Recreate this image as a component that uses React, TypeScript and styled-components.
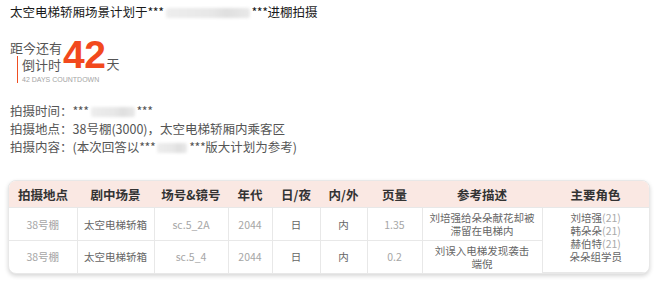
import styled, { createGlobalStyle } from 'styled-components';

const GlobalStyle = createGlobalStyle`
  html, body {
    margin: 0;
    padding: 0;
    background: #fff;
  }
  body {
    font-family: "Noto Sans CJK SC", "Noto Sans", sans-serif;
    color: #555;
  }
`;

const Page = styled.div`
  width: 660px;
  height: 286px;
  box-sizing: border-box;
  padding: 3px 10px 0 10px;
  display: flex;
  flex-direction: column;
  overflow: hidden;
`;

const Title = styled.h1`
  margin: 0;
  font-size: 12.5px;
  line-height: 18px;
  font-weight: 400;
  color: #1a1a1a;
  white-space: nowrap;
`;

const Redacted = styled.span<{ $w: number }>`
  display: inline-block;
  width: ${(p) => p.$w}px;
  height: 10px;
  margin: 0 2px;
  vertical-align: -1px;
  background: linear-gradient(90deg, #ededed 0%, #e7e7e7 55%, #dfdfdf 72%, #e9e9e9 100%);
  filter: blur(1.5px);
  border-radius: 2px;
`;

const Stars = styled.span`
  letter-spacing: -0.5px;
`;

const Countdown = styled.div`
  margin-top: 18px;
  display: grid;
  grid-template-columns: 53px max-content max-content;
  grid-template-rows: 17px 15px 12px;
`;

const Lead = styled.div`
  grid-area: 1 / 1 / 2 / 2;
  font-size: 13px;
  line-height: 17px;
  color: #555;
  white-space: nowrap;
`;

const Marked = styled.div`
  grid-area: 2 / 1 / 4 / 2;
  margin-left: 7px;
  padding-left: 4px;
  border-left: 1.5px solid #ef4f22;
  display: flex;
  flex-direction: column;
`;

const Sub = styled.div`
  padding-top: 2px;
  font-size: 13px;
  line-height: 14px;
  color: #555;
  white-space: nowrap;
`;

const Tag = styled.div`
  margin-top: 3px;
  font-family: "Liberation Sans", Arial, sans-serif;
  font-size: 7px;
  line-height: 9px;
  color: #a5a5a5;
  white-space: nowrap;
`;

const Num = styled.div`
  grid-area: 1 / 2 / 3 / 3;
  font-family: "Liberation Sans", Arial, sans-serif;
  font-weight: 700;
  font-size: 39px;
  line-height: 31px;
  letter-spacing: -0.5px;
  color: #f2491d;
`;

const Unit = styled.div`
  grid-area: 2 / 3 / 3 / 4;
  align-self: end;
  padding-left: 1px;
  font-size: 13px;
  line-height: 14px;
  color: #555;
`;

const Info = styled.div`
  margin-top: 19px;
  display: flex;
  flex-direction: column;
  font-size: 12.5px;
  line-height: 18px;
  color: #555;
`;

const InfoLine = styled.div`
  white-space: nowrap;
`;

const Card = styled.div`
  margin-top: 24px;
  margin-left: -2px;
  width: 642px;
  box-sizing: border-box;
  border: 1px solid #e8e8e8;
  border-radius: 8px;
  overflow: hidden;
  box-shadow: 0 2px 4px rgba(0, 0, 0, 0.16);
  background: #fff;
`;

const Table = styled.table`
  width: 100%;
  border-collapse: collapse;
  table-layout: fixed;
`;

const Th = styled.th`
  background: #fae8e3;
  height: 26px;
  padding: 0;
  font-size: 12.5px;
  font-weight: 700;
  color: #333;
  text-align: center;
  white-space: nowrap;
`;

const Row = styled.tr<{ $h: number }>`
  height: ${(p) => p.$h}px;
  &:last-child td {
    border-bottom: none;
  }
`;

const Td = styled.td<{ $tone?: 'light' | 'mid' }>`
  border: 1px solid #e8e8e8;
  padding: 0 4px;
  font-size: 10.5px;
  line-height: 13px;
  text-align: center;
  vertical-align: middle;
  color: ${(p) => (p.$tone === 'light' ? '#a6a6a6' : '#666')};
  &:first-child {
    border-left: none;
  }
  &:last-child {
    border-right: none;
  }
`;

const Cast = styled.div`
  display: flex;
  flex-direction: column;
  padding-bottom: 6px;
  font-size: 10.5px;
  line-height: 13px;
  color: #666;
`;

const Age = styled.span`
  color: #aaa;
`;

const widths = [68, 77, 74, 44, 48, 47, 55, 120, 107];
const heads = ['拍摄地点', '剧中场景', '场号&镜号', '年代', '日/夜', '内/外', '页量', '参考描述', '主要角色'];

const rows = [
  { stage: '38号棚', scene: '太空电梯轿箱', shot: 'sc.5_2A', year: '2044', day: '日', side: '内', pages: '1.35', desc: ['刘培强给朵朵献花却被', '滞留在电梯内'], h: 33 },
  { stage: '38号棚', scene: '太空电梯轿箱', shot: 'sc.5_4', year: '2044', day: '日', side: '内', pages: '0.2', desc: ['刘误入电梯发现袭击', '端倪'], h: 32 },
];

const cast = [
  { name: '刘培强', age: '(21)' },
  { name: '韩朵朵', age: '(21)' },
  { name: '赫伯特', age: '(21)' },
  { name: '朵朵组学员', age: '' },
];

export default function App() {
  return (
    <Page>
      <GlobalStyle />
      <Title>
        太空电梯轿厢场景计划于<Stars>***</Stars>
        <Redacted $w={84} />
        <Stars>***</Stars>进棚拍摄
      </Title>

      <Countdown>
        <Lead>距今还有</Lead>
        <Marked>
          <Sub>倒计时</Sub>
          <Tag>42 DAYS COUNTDOWN</Tag>
        </Marked>
        <Num>42</Num>
        <Unit>天</Unit>
      </Countdown>

      <Info>
        <InfoLine>
          拍摄时间：<Stars>***</Stars>
          <Redacted $w={44} />
          <Stars>***</Stars>
        </InfoLine>
        <InfoLine>拍摄地点：38号棚(3000)，太空电梯轿厢内乘客区</InfoLine>
        <InfoLine>
          拍摄内容：(本次回答以<Stars>***</Stars>
          <Redacted $w={30} />
          <Stars>***</Stars>版大计划为参考)
        </InfoLine>
      </Info>

      <Card>
        <Table>
          <colgroup>
            {widths.map((w, i) => (
              <col key={i} style={{ width: w }} />
            ))}
          </colgroup>
          <thead>
            <tr>
              {heads.map((h) => (
                <Th key={h}>{h}</Th>
              ))}
            </tr>
          </thead>
          <tbody>
            {rows.map((r, i) => (
              <Row key={i} $h={r.h}>
                <Td $tone="light">{r.stage}</Td>
                <Td>{r.scene}</Td>
                <Td $tone="light">{r.shot}</Td>
                <Td $tone="light">{r.year}</Td>
                <Td>{r.day}</Td>
                <Td>{r.side}</Td>
                <Td $tone="light">{r.pages}</Td>
                <Td>
                  {r.desc[0]}
                  <br />
                  {r.desc[1]}
                </Td>
                {i === 0 && (
                  <Td rowSpan={2}>
                    <Cast>
                      {cast.map((c) => (
                        <span key={c.name}>
                          {c.name}
                          <Age>{c.age}</Age>
                        </span>
                      ))}
                    </Cast>
                  </Td>
                )}
              </Row>
            ))}
          </tbody>
        </Table>
      </Card>
    </Page>
  );
}
